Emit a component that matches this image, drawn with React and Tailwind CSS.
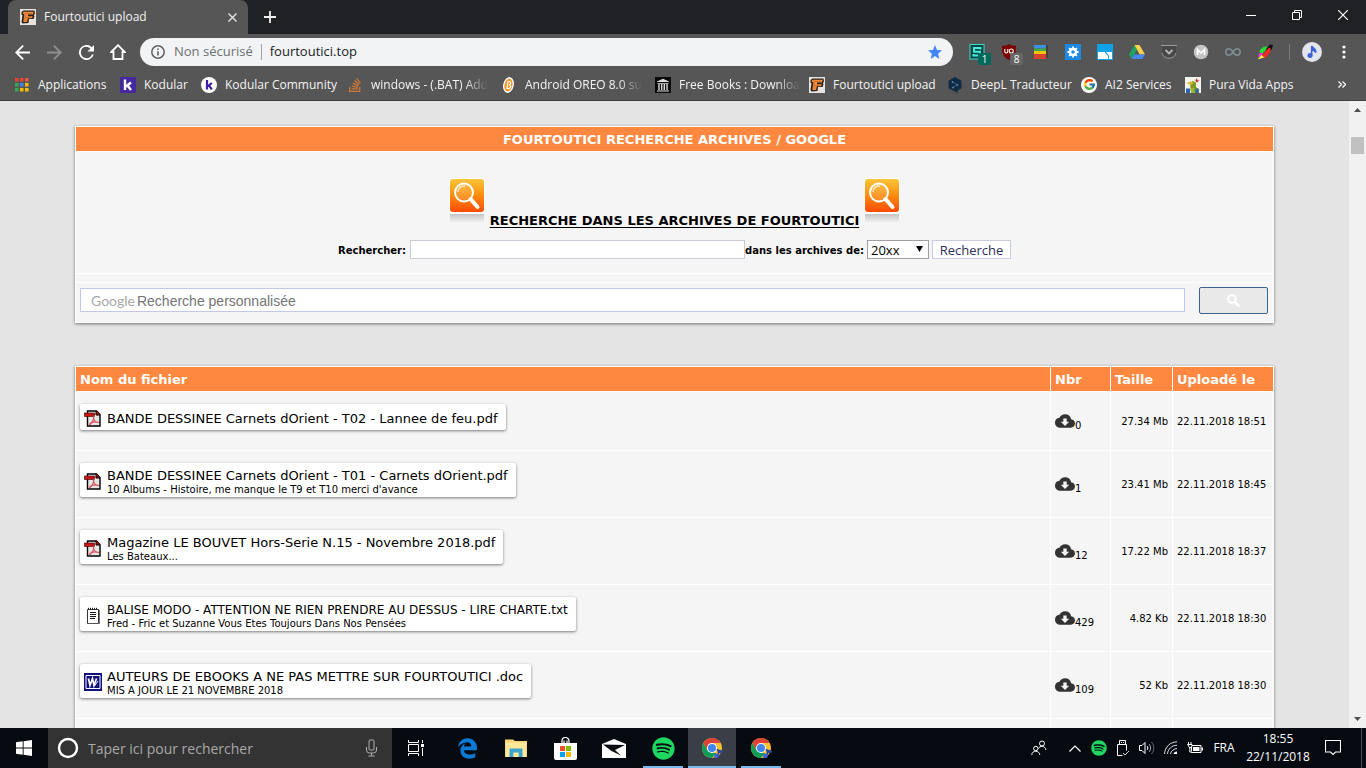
import React from "react";
import { MdCloudDownload } from "react-icons/md";
import { FcGoogle } from "react-icons/fc";
import { FaSpotify, FaEdgeLegacy, FaStackOverflow } from "react-icons/fa6";

const UI = "font-['Open_Sans','Noto_Sans',sans-serif]";
const VERDANA = "font-['DejaVu_Sans',sans-serif]";

function Svg({ w = 16, h = 16, box, children, className = "" }) {
  return (
    <svg width={w} height={h} viewBox={box || `0 0 ${w} ${h}`} fill="none" aria-hidden="true" className={`shrink-0 ${className}`}>
      {children}
    </svg>
  );
}

/* ---------- small icons ---------- */

const SiteIcon = () => (
  <Svg>
    <rect width="16" height="16" fill="#e6e2dd" />
    <path d="M1.500 3 3.500 1.500h11L15 4l-1 2.500.5 1-1 2.500H9L8.500 14l-6 .5-1-1.500 1-7H1.500z" fill="#2a2018" />
    <path d="M2.800 3.500 4 2.700h9.800L12.800 5.500H8V7.300h4.800L12 9.300H7.800L7 13H3.300L4.300 5H2.800z" fill="#f08a3c" />
    <path d="M5 4.500h7M5.500 8.500h5M5 6v6" stroke="#b95f22" strokeWidth=".6" />
  </Svg>
);

const AppsIcon = () => {
  const colors = ["#ea4335", "#ea4335", "#f5554a", "#34a853", "#4285f4", "#fbbc05", "#34a853", "#fbbc05", "#fbbc05"];
  return (
    <Svg>
      {colors.map((c, i) => (
        <rect key={i} x={1 + (i % 3) * 5} y={1 + Math.floor(i / 3) * 5} width="3.500" height="3.500" fill={c} />
      ))}
    </Svg>
  );
};

const KodularIcon = () => (
  <Svg>
    <rect width="16" height="16" rx="1" fill="#4527a0" />
    <path d="M5 2.500V13M11 5.500 6 9.500M7.500 8.500 11 13" stroke="#fff" strokeWidth="2.400" />
  </Svg>
);

const KodularRound = () => (
  <Svg>
    <circle cx="8" cy="8" r="8" fill="#fff" />
    <path d="M6 3V12.500M11 6 6.800 9.200M8 8.300 10.800 12.500" stroke="#3f1fa5" strokeWidth="2.200" />
  </Svg>
);

const OreoIcon = () => (
  <Svg>
    <ellipse cx="7.500" cy="8" rx="5.300" ry="8" fill="#fff" transform="rotate(12 7.500 8)" />
    <ellipse cx="7.500" cy="8" rx="4" ry="6.500" fill="#f29a2e" transform="rotate(12 7.500 8)" />
    <path d="M7 4.500 6 11.500h1.500c2.500 0 3-3 .5-3.500 2.300-.5 2.300-3.500 0-3.500z" stroke="#fff" strokeWidth="1.100" />
  </Svg>
);

const ArchiveIcon = () => (
  <Svg>
    <rect width="16" height="16" fill="#0a0a0a" />
    <path d="M2 4.500 8 1.800l6 2.700V5H2zM2.500 6h11v.8h-11zM2 13.500h12v1H2z" fill="#ddd" />
    <path d="M4 7v6M6.700 7v6M9.300 7v6M12 7v6" stroke="#ddd" strokeWidth="1.400" />
  </Svg>
);

const DeepLIcon = () => (
  <Svg>
    <path d="M8 0 14.500 3.800v7.500L10.500 13.600V16L8 14.500 1.500 11.300V3.800z" fill="#0f2b46" />
    <path d="M5.500 5 10.500 7.800 6 10.500" stroke="#4a6c8c" strokeWidth=".8" />
    <circle cx="5.500" cy="5" r=".9" fill="#5f86a8" />
    <circle cx="10.500" cy="7.800" r=".9" fill="#5f86a8" />
    <circle cx="6" cy="10.500" r=".9" fill="#5f86a8" />
  </Svg>
);

const GoogleIcon = () => (
  <span className="flex size-4 shrink-0 items-center justify-center rounded-full bg-white">
    <FcGoogle size={13} />
  </span>
);

const PuraVidaIcon = () => (
  <Svg>
    <rect width="16" height="16" fill="#f4f4ec" />
    <path d="M5 5.500 8 4l3 1.500V10l3 2.500V16H6l-.5-4z" fill="#7f9a1e" />
    <path d="M8.500 1.500 10.500 3.500 12 1l.5 2.500L14.500 3 12 5.500z" fill="#c2202a" />
    <path d="M1.500 6 6 4.500l3 1.500-3 2z" fill="#d9b62a" />
    <path d="M1 11.500h4V16H1zM10.500 11.500h3V16h-3z" fill="#2b62b5" />
    <path d="M6 11h3.500v5H6z" fill="#9bb52c" />
  </Svg>
);

/* ---------- toolbar ---------- */

function IconButton({ label, children, width = "w-8", className = "" }) {
  return (
    <button type="button" aria-label={label} className={`flex shrink-0 items-center justify-center ${width} ${className}`}>
      {children}
    </button>
  );
}

const extensions = [
  {
    label: "Stylus",
    badge: "1",
    badgeClass: "bg-[#00695c]",
    icon: (
      <Svg>
        <rect x="1" y=".5" width="14" height="14.500" fill="#0a4644" stroke="#39d6c6" />
        <path d="M11.500 5.500V4H5v3.700h6v3.800H4.500V10" stroke="#45eddb" strokeWidth="1.900" />
      </Svg>
    ),
  },
  {
    label: "uBlock Origin",
    badge: "8",
    badgeClass: "bg-[#666666]",
    icon: (
      <Svg>
        <path d="M8 0c2 1.500 4.500 1.800 7 1.800 0 7-.5 11-7 14.200C1.500 12.800 1 8.800 1 1.800 3.500 1.800 6 1.500 8 0z" fill="#7d0000" />
        <path d="M3.800 5v2.500a1.500 1.500 0 0 0 3 0V5" stroke="#fff" strokeWidth="1.100" />
        <circle cx="10.300" cy="7" r="2" stroke="#fff" strokeWidth="1.100" />
      </Svg>
    ),
  },
  {
    label: "Manager",
    icon: (
      <Svg>
        <path d="M12 1h3v13h-3z" fill="#46403c" />
        <path d="M1 1h12v3.500H1z" fill="#3f8fe0" />
        <path d="M1 4.500h12V7H1z" fill="#3bab4b" />
        <path d="M1 7h12v3H1z" fill="#f4c20d" />
        <path d="M1 10h12v5H1z" fill="#d8432e" />
      </Svg>
    ),
  },
  {
    label: "Options",
    icon: (
      <Svg>
        <rect width="16" height="16" fill="#1e88e5" />
        <circle cx="8" cy="8" r="3" stroke="#fff" strokeWidth="2.400" />
        <path d="M8 2.500v2M8 11.500v2M2.500 8h2M11.500 8h2M4.100 4.100l1.500 1.500M10.400 10.400l1.500 1.500M11.900 4.100l-1.500 1.500M5.600 10.400l-1.500 1.500" stroke="#fff" strokeWidth="1.800" />
      </Svg>
    ),
  },
  {
    label: "Onglets",
    icon: (
      <Svg>
        <rect width="16" height="16" fill="#0ea2e8" />
        <path d="M1 8h6.500l3.500 4V15H1z" fill="#fff" />
        <path d="M9 8h6v7h-3v-3.500z" fill="#fff" />
      </Svg>
    ),
  },
  {
    label: "Google Drive",
    icon: (
      <Svg>
        <path d="M5.500 1 0 10.500 2.700 15 8 5.500z" fill="#1fa463" />
        <path d="M5.500 1h5L16 10.500h-5.300z" fill="#ffd04b" />
        <path d="M5.300 10.500H16L13.300 15H2.700z" fill="#4688f4" />
      </Svg>
    ),
  },
  {
    label: "Pocket",
    icon: (
      <Svg>
        <path d="M1 2h14v5c0 9-14 9-14 0z" fill="#484848" />
        <path d="M0 1.500h16M1 9c1.500 7 12.500 7 14 0" stroke="#9a9a9a" />
        <path d="m4.500 6 3.500 3.500L11.500 6" stroke="#b5b5b5" strokeWidth="1.800" />
      </Svg>
    ),
  },
  {
    label: "Mega",
    icon: (
      <Svg>
        <circle cx="8" cy="8" r="7.300" fill="#c4c4c4" />
        <path d="M4.500 11V5.500L8 9l3.500-3.500V11" stroke="#fff" strokeWidth="1.700" />
      </Svg>
    ),
  },
  {
    label: "Infini",
    icon: (
      <Svg>
        <path d="M8 8C6.500 5.500 5.500 4.800 4 4.800a3.200 3.200 0 0 0 0 6.400C5.500 11.200 6.500 10.500 8 8s2.500-3.200 4-3.200a3.200 3.200 0 0 1 0 6.400C10.500 11.200 9.500 10.500 8 8z" stroke="#7d8f92" strokeWidth="1.500" />
      </Svg>
    ),
  },
  {
    label: "Couleurs",
    icon: (
      <Svg>
        <path d="M9 5 13 .5 16 1l-1 4-4.500 5z" fill="#111" />
        <path d="M2 7.500C4 4 7 2 10.500 2.500L9 5.500 5 10z" fill="#22dd33" />
        <path d="M2.500 9 1 13.500l3-1.500 2-3z" fill="#ff35d0" />
        <path d="M.5 15.500 4.500 11l4 2z" fill="#fff34a" />
        <path d="M5 11.500 12 3.500l2 1.500-1.500 4-4.500 5z" fill="#ff2a1f" />
      </Svg>
    ),
  },
];

const bookmarks = [
  { label: "Applications", icon: <AppsIcon />, width: "w-[106px]" },
  { label: "Kodular", icon: <KodularIcon />, width: "w-[81px]" },
  { label: "Kodular Community", icon: <KodularRound />, width: "w-[146px]" },
  { label: "windows - (.BAT) Add", icon: <FaStackOverflow size={16} color="#d07a35" className="shrink-0" />, width: "w-[154px]", fade: true },
  { label: "Android OREO 8.0 su", icon: <OreoIcon />, width: "w-[154px]", fade: true },
  { label: "Free Books : Downloa", icon: <ArchiveIcon />, width: "w-[154px]", fade: true },
  { label: "Fourtoutici upload", icon: <SiteIcon />, width: "w-[138px]" },
  { label: "DeepL Traducteur", icon: <DeepLIcon />, width: "w-[134px]" },
  { label: "AI2 Services", icon: <GoogleIcon />, width: "w-[104px]" },
  { label: "Pura Vida Apps", icon: <PuraVidaIcon />, width: "w-[120px]" },
];

function TabStrip() {
  return (
    <header className="flex h-[34px] bg-[#202124]">
      <div className="ml-2 flex w-60 items-center rounded-t-lg bg-[#565656] pr-2 pl-3">
        <SiteIcon />
        <span className="flex-1 pl-2 text-xs text-[#f1f1f1]">Fourtoutici upload</span>
        <IconButton label="Fermer l'onglet" width="w-4">
          <Svg w={9} h={9}><path d="m.5.500 8 8M8.500.500l-8 8" stroke="#e4e4e4" strokeWidth="1.400" /></Svg>
        </IconButton>
      </div>
      <IconButton label="Nouvel onglet" className="ml-[6px]">
        <Svg w={12} h={12}><path d="M6 0v12M0 6h12" stroke="#f1f1f1" strokeWidth="1.800" /></Svg>
      </IconButton>
      <div className="flex-1" />
      <div className="flex pb-[5px]">
        <IconButton label="Réduire" width="w-[46px]">
          <Svg w={10} h={10}><path d="M0 5.500h10" stroke="#fff" /></Svg>
        </IconButton>
        <IconButton label="Restaurer" width="w-[46px]">
          <Svg w={10} h={10}><path d="M.5 2.500h7v7h-7zM2.500 2V.500h7v7H8" stroke="#fff" /></Svg>
        </IconButton>
        <IconButton label="Fermer" width="w-[46px]">
          <Svg w={10} h={10}><path d="m0 0 10 10M10 0 0 10" stroke="#fff" strokeWidth="1.200" /></Svg>
        </IconButton>
      </div>
    </header>
  );
}

function Toolbar() {
  return (
    <div className="flex h-9 items-stretch bg-[#565656] pl-[6px]">
      <IconButton label="Précédent">
        <Svg w={15} h={15} box="4 4 16 16"><path d="M20 11H7.800l5.600-5.600L12 4l-8 8 8 8 1.400-1.400L7.800 13H20z" fill="#fff" /></Svg>
      </IconButton>
      <IconButton label="Suivant">
        <Svg w={15} h={15} box="4 4 16 16"><path d="m12 4-1.400 1.400 5.600 5.600H4v2h12.200l-5.600 5.600L12 20l8-8z" fill="#8f8f8f" /></Svg>
      </IconButton>
      <IconButton label="Actualiser">
        <Svg w={15} h={15} box="4 4 16 16"><path d="M17.650 6.350A8 8 0 1 0 19.730 14h-2.080A6 6 0 1 1 12 6c1.660 0 3.140.690 4.220 1.780L13 11h7V4z" fill="#fff" /></Svg>
      </IconButton>
      <IconButton label="Accueil">
        <Svg><path d="M8 1.200 1.300 8H3.500v7h9V8h2.200z" stroke="#fff" strokeWidth="1.800" /></Svg>
      </IconButton>
      <div className="my-1 ml-[6px] flex min-w-0 flex-1 items-center rounded-full bg-[#f1f3f4] px-[11px] text-[13px]">
        <Svg w={14} h={14}>
          <circle cx="7" cy="7" r="6.200" stroke="#5f6368" strokeWidth="1.500" />
          <path d="M7 6.200v4.300M7 3.500v1.500" stroke="#5f6368" strokeWidth="1.600" />
        </Svg>
        <span className="ml-[9px] text-[#6b6f73]">Non sécurisé</span>
        <span className="mx-2 h-4 w-px bg-[#a0a3a7]" />
        <input aria-label="Adresse" defaultValue="fourtoutici.top" className="min-w-0 flex-1 bg-transparent text-[#202124] outline-none" />
        <Svg w={14} h={14}><path d="m7 0 2 4.900 5 .4-3.900 3.400L11.300 14 7 11.100 2.700 14l1.200-5.300L0 5.300l5-.4z" fill="#4285f4" /></Svg>
      </div>
      <div className="flex pl-2">
        {extensions.map((e) => (
          <IconButton key={e.label} label={e.label}>
            <span className="relative flex">
              {e.icon}
              {e.badge && (
                <span className={`absolute top-[9px] left-[9px] flex h-3 w-[13px] items-center justify-center rounded-xs text-[10px] text-white ${e.badgeClass}`}>
                  {e.badge}
                </span>
              )}
            </span>
          </IconButton>
        ))}
      </div>
      <span className="mx-2 h-4 w-px self-center bg-[#7c7c7c]" />
      <IconButton label="Profil" width="w-7">
        <Svg w={20} h={20}>
          <circle cx="10" cy="10" r="10" fill="#e3e5ec" />
          <circle cx="8" cy="13.500" r="2.500" fill="#3b62d6" />
          <path d="M9.700 13.500V4c1 2.500 4.800 2.500 4 6.500-.6-2-2-2.500-4-2.500" stroke="#3b62d6" strokeWidth="1.600" fill="#3b62d6" />
        </Svg>
      </IconButton>
      <IconButton label="Menu" className="mr-[6px] ml-[2px]">
        <Svg w={4} h={14}>
          <circle cx="2" cy="2" r="1.600" fill="#fff" />
          <circle cx="2" cy="7" r="1.600" fill="#fff" />
          <circle cx="2" cy="12" r="1.600" fill="#fff" />
        </Svg>
      </IconButton>
    </div>
  );
}

function BookmarksBar() {
  return (
    <nav className="flex h-[31px] items-center border-b border-[#3f3f3f] bg-[#565656] pb-px pl-[14px] text-xs text-[#f4f4f4]">
      {bookmarks.map((b) => (
        <a key={b.label} href="#" className={`flex shrink-0 items-center gap-2 ${b.width}`}>
          {b.icon}
          <span className={`whitespace-nowrap ${b.fade ? "[mask-image:linear-gradient(to_right,black_80%,transparent)]" : ""}`}>
            {b.label}
          </span>
        </a>
      ))}
      <div className="flex-1" />
      <IconButton label="Autres favoris" className="mr-2">
        <Svg w={8} h={7}><path d="m.5.500 3 3-3 3M4.500.500l3 3-3 3" stroke="#fff" strokeWidth="1.300" /></Svg>
      </IconButton>
    </nav>
  );
}

/* ---------- page ---------- */

function SearchPicture({ id }) {
  return (
    <Svg w={36} h={48} className="mb-[3px]">
      <defs>
        <linearGradient id={`${id}-fill`} x1="0" y1="0" x2="0" y2="1">
          <stop offset="0" stopColor="#fdc63a" />
          <stop offset=".5" stopColor="#fb8c0e" />
          <stop offset="1" stopColor="#fd4a05" />
        </linearGradient>
        <linearGradient id={`${id}-shade`} x1="0" y1="0" x2="0" y2="1">
          <stop offset="0" stopColor="#c4c4c4" />
          <stop offset="1" stopColor="#f5f5f5" />
        </linearGradient>
      </defs>
      <rect width="36" height="36" rx="3" fill="#fff" />
      <rect x="1" y="1" width="34" height="33" rx="3" fill={`url(#${id}-fill)`} />
      <rect x="1" y="36" width="34" height="9" fill={`url(#${id}-shade)`} />
      <circle cx="15" cy="14.500" r="9" stroke="#fff" strokeWidth="2" fill="#fff" fillOpacity=".12" />
      <path d="M9 14a6 6 0 0 1 7-6" stroke="#fff" strokeOpacity=".7" strokeWidth="1.500" />
      <path d="m21.500 21 7 8" stroke="#fff" strokeWidth="4" strokeLinecap="round" />
    </Svg>
  );
}

const panel = "bg-white shadow-[0_1px_3px_rgba(0,0,0,0.5)]";

function SearchPanel() {
  return (
    <section className={`grid gap-px p-px ${panel}`}>
      <h2 className="bg-[#ff8840] pt-[2px] text-center text-[13px] leading-[22px] font-bold text-white">FOURTOUTICI RECHERCHE ARCHIVES / GOOGLE</h2>
      <div className="bg-[#f5f5f5] pt-[26px] pb-[14px]">
        <div className="flex items-end justify-center gap-[5px]">
          <SearchPicture id="left" />
          <h3 className="text-[13px] leading-4 font-bold text-black underline underline-offset-2">RECHERCHE DANS LES ARCHIVES DE FOURTOUTICI</h3>
          <SearchPicture id="right" />
        </div>
        <form className="mt-[11px] flex h-[19px] items-stretch justify-center text-[10px] leading-[22px] font-bold text-black">
          <label htmlFor="archive-query" className="mr-1">Rechercher:</label>
          <input id="archive-query" className="w-[335px] border border-[#c8ccd4] bg-white px-1 font-normal outline-none" />
          <label htmlFor="archive-year" className="mr-[3px]">dans les archives de:</label>
          <span className={`relative mr-[3px] flex w-[62px] text-[13px] font-normal ${UI}`}>
            <select id="archive-year" className="w-full appearance-none border border-[#a0a0a0] bg-white pl-[3px] leading-4 outline-none">
              <option>20xx</option>
            </select>
            <Svg w={7} h={6} className="pointer-events-none absolute top-[6px] right-[6px]"><path d="M0 0h7L3.500 6z" fill="#000" /></Svg>
          </span>
          <button type="button" className={`w-[79px] border border-[#c8cce0] bg-white text-[13px] leading-4 font-normal text-[#2f2f5c] ${UI}`}>Recherche</button>
        </form>
      </div>
      <div className="h-2 bg-[#f5f5f5]" />
      <form className="flex h-[39px] items-center gap-[14px] bg-[#f5f5f5] px-1 pb-[5px] font-['Liberation_Sans',sans-serif]">
        <label className="flex h-6 flex-1 items-center border border-[#c3c8ea] bg-white pt-px pl-[10px]">
          <span className="pr-[2px] font-['Lato',sans-serif] text-sm leading-5 text-[#a8a8a8]">Google</span>
          <input placeholder="Recherche personnalisée" className="min-w-0 flex-1 bg-transparent pt-px text-sm leading-5 outline-none placeholder:text-[#757575]" />
        </label>
        <button type="button" aria-label="Rechercher" className="mr-px flex h-[27px] w-[69px] items-center justify-center rounded-xs border border-[#3a6591] bg-[#e9e9e9]">
          <Svg w={13} h={13}><circle cx="5" cy="5" r="3.800" stroke="#fff" strokeWidth="2" /><path d="m8 8 4.500 4.500" stroke="#fff" strokeWidth="2.200" /></Svg>
        </button>
      </form>
    </section>
  );
}

const PdfIcon = () => (
  <Svg w={17} h={17}>
    <path d="M3.500 1h9L16 4.500V16H3.500z" fill="#e6e6e6" stroke="#000" strokeWidth="1.400" />
    <path d="M12 .5V5h4" fill="#b01010" stroke="#000" />
    <rect x=".5" y="3" width="10" height="3.500" fill="#c81414" stroke="#400" strokeWidth=".6" />
    <path d="M9.500 6.500c.5 3-1.500 6.500-4.500 8.500M9.500 7c0 3 2 5.500 5.500 5.500M5.500 13.500c2.500-1.500 6-2 9-1" stroke="#d8545c" strokeWidth="1.200" />
  </Svg>
);

const TxtIcon = () => (
  <Svg w={17} h={17} box="-1 0 17 17">
    <path d="M2.500 2.500h11V16.500h-11z" fill="#fff" stroke="#333" />
    <path d="M14.500 3v14M3 17h11" stroke="#777" />
    <path d="M3.500 .8v2M5.500 .8v2M7.500 .8v2M9.500 .8v2M11.500 .8v2" stroke="#222" />
    <path d="M5 5.500h6M5 7.500h6M5 9.500h6M5 11.500h5" stroke="#111" />
  </Svg>
);

const DocIcon = () => (
  <Svg w={18} h={18}>
    <rect width="18" height="18" fill="#10107c" />
    <path d="M2 2.500h14v13H2z" stroke="#fff" />
    <path d="m4.500 5.500 1.500 7 2.500-7 1.500 7 2.500-7" stroke="#fff" strokeWidth="1.700" />
    <path d="m10.500 13 3.500-5" stroke="#fff" />
  </Svg>
);

const icons = { pdf: PdfIcon, txt: TxtIcon, doc: DocIcon };

const files = [
  { type: "pdf", name: "BANDE DESSINEE Carnets dOrient - T02 - Lannee de feu.pdf", count: "0", size: "27.34 Mb", date: "22.11.2018 18:51" },
  { type: "pdf", name: "BANDE DESSINEE Carnets dOrient - T01 - Carnets dOrient.pdf", note: "10 Albums - Histoire, me manque le T9 et T10 merci d'avance", count: "1", size: "23.41 Mb", date: "22.11.2018 18:45" },
  { type: "pdf", name: "Magazine LE BOUVET Hors-Serie N.15 - Novembre 2018.pdf", note: "Les Bateaux...", count: "12", size: "17.22 Mb", date: "22.11.2018 18:37" },
  { type: "txt", small: true, name: "BALISE MODO - ATTENTION NE RIEN PRENDRE AU DESSUS - LIRE CHARTE.txt", note: "Fred - Fric et Suzanne Vous Etes Toujours Dans Nos Pensées", count: "429", size: "4.82 Kb", date: "22.11.2018 18:30" },
  { type: "doc", name: "AUTEURS DE EBOOKS A NE PAS METTRE SUR FOURTOUTICI .doc", note: "MIS A JOUR LE 21 NOVEMBRE 2018", count: "109", size: "52 Kb", date: "22.11.2018 18:30" },
];

function FileRow({ file }) {
  const Icon = icons[file.type];
  return (
    <tr className="[&>td]:bg-[#f5f5f5]">
      <td className="px-1 pt-3 pb-5">
        <a href="#" className="flex min-h-[26px] w-fit items-center rounded-xs bg-white pt-[3px] pb-px pr-2 pl-1 shadow-[0_1px_3px_rgba(0,0,0,0.5)]">
          <span className="flex w-[23px]"><Icon /></span>
          <span className="pt-[2px]">
            <span className={`block leading-4 whitespace-nowrap ${file.small ? "text-[12px]" : "text-[13px]"}`}>{file.name}</span>
            {file.note && <span className="block text-[10px] leading-3 whitespace-nowrap">{file.note}</span>}
          </span>
        </a>
      </td>
      <td className="px-1">
        <button type="button" aria-label="Télécharger" className="flex items-center">
          <MdCloudDownload size={20} color="#333" />
          <span className="pt-[10px] leading-3">{file.count}</span>
        </button>
      </td>
      <td className="px-1 text-right whitespace-nowrap">{file.size}</td>
      <td className="px-1 whitespace-nowrap">{file.date}</td>
    </tr>
  );
}

function FilesTable() {
  return (
    <table className={`w-full table-fixed border-separate border-spacing-px text-[10px] text-black ${panel}`}>
      <thead>
        <tr className="text-left text-[13px] leading-[22px] text-white [&>th]:bg-[#ff8840] [&>th]:px-1 [&>th]:pt-[2px]">
          <th>Nom du fichier</th>
          <th className="w-[59px]">Nbr</th>
          <th className="w-[61px]">Taille</th>
          <th className="w-[100px]">Uploadé le</th>
        </tr>
      </thead>
      <tbody>
        {files.map((f) => (
          <FileRow key={f.name} file={f} />
        ))}
        <tr className="h-16 [&>td]:bg-[#f5f5f5]">
          <td /><td /><td /><td />
        </tr>
      </tbody>
    </table>
  );
}

function Scrollbar() {
  return (
    <div className="flex w-[17px] shrink-0 flex-col items-center bg-[#f1f1f1] py-[7px]" aria-hidden="true">
      <Svg w={7} h={4}><path d="M0 4h7L3.500 0z" fill="#505050" /></Svg>
      <div className="mt-[25px] h-[17px] w-[13px] bg-[#c1c1c1]" />
      <div className="flex-1" />
      <Svg w={7} h={4}><path d="M0 0h7L3.500 4z" fill="#505050" /></Svg>
    </div>
  );
}

/* ---------- taskbar ---------- */

const ChromeIcon = () => (
  <Svg w={22} h={22} box="0 0 24 24">
    <circle cx="12" cy="12" r="11" fill="#fbc02d" />
    <path d="M12 1a11 11 0 0 1 9.500 5.500H12L7.200 14.700 2.500 6.500A11 11 0 0 1 12 1z" fill="#db4437" />
    <path d="M2.500 6.500 7.200 14.700 12 17.500h4.500L12 23A11 11 0 0 1 2.500 6.500z" fill="#0f9d58" />
    <circle cx="12" cy="12" r="5.500" fill="#fff" />
    <circle cx="12" cy="12" r="4.400" fill="#4285f4" />
    <path d="M17.500 13c1 2.500 4 1.500 6 3-2 .3-3 .8-4.500.5V20" stroke="#2746a0" strokeWidth="1.600" fill="#2746a0" />
    <circle cx="16.800" cy="20.500" r="2.600" fill="#3b62d6" />
  </Svg>
);

const apps = [
  {
    label: "Explorateur de fichiers",
    icon: (
      <Svg w={22} h={20}>
        <path d="M0 1.500h8L10 3h12v16H0z" fill="#f7d774" />
        <path d="M1 4.500h20V19H1z" fill="#fde79b" />
        <path d="M4.500 19v-8.500h13V19h-3.800v-4.500H8.300V19z" fill="#3ba5cc" />
      </Svg>
    ),
  },
  {
    label: "Microsoft Store",
    icon: (
      <Svg w={23} h={23}>
        <path d="M8 6V4a3.500 3.500 0 0 1 7 0v2M10 6V3.500M13 6V3.500" stroke="#fff" strokeWidth="1.200" />
        <path d="M0 6h23v15a2 2 0 0 1-2 2H2a2 2 0 0 1-2-2z" fill="#fff" />
        <path d="M6 9h5v5H6z" fill="#f25022" />
        <path d="M12 9h5v5h-5z" fill="#7fba00" />
        <path d="M6 15h5v5H6z" fill="#00a4ef" />
        <path d="M12 15h5v5h-5z" fill="#ffb900" />
      </Svg>
    ),
  },
  {
    label: "Courrier",
    icon: (
      <Svg w={24} h={19}>
        <path d="M0 5 12 0l12 5v14H0z" fill="#fff" />
        <path d="M1 5.500 23 6l-10 5 6 5.500L9.500 12z" fill="#0a0d12" />
      </Svg>
    ),
  },
  { label: "Spotify", running: true, icon: <FaSpotify size={23} color="#1ed760" /> },
  { label: "Google Chrome", active: true, icon: <ChromeIcon /> },
  { label: "Google Chrome (2)", running: true, icon: <ChromeIcon /> },
];

function TaskButton({ label, icon, running, active }) {
  return (
    <button type="button" aria-label={label} className={`flex w-12 flex-col items-center ${active ? "bg-[#3a3f47]" : ""}`}>
      <span className="flex flex-1 items-center pt-[2px]">{icon}</span>
      <span className={`h-[2px] ${active ? "w-12 bg-[#76b9ed]" : running ? "w-10 bg-[#76b9ed]" : "w-10"}`} />
    </button>
  );
}

function TrayButton({ label, children, width = "w-6", className = "" }) {
  return (
    <button type="button" aria-label={label} className={`flex shrink-0 items-center justify-center ${width} ${className}`}>
      {children}
    </button>
  );
}

function Taskbar() {
  return (
    <footer className="flex h-10 shrink-0 bg-[#060b12] text-white">
      <TrayButton label="Démarrer" width="w-12">
        <Svg><path d="M0 2.300 6.700 1.300v6.300H0zM7.600 1.200 16 0v7.600H7.600zM0 8.500h6.700v6.300L0 13.800zM7.600 8.500H16V16l-8.400-1.200z" fill="#fff" /></Svg>
      </TrayButton>
      <label className="flex w-[344px] items-center bg-[#333333] pr-[14px] pl-[9px]">
        <Svg w={22} h={22}><circle cx="11" cy="11" r="9" stroke="#fff" strokeWidth="2.400" /></Svg>
        <input placeholder="Taper ici pour rechercher" className="ml-[9px] min-w-0 flex-1 bg-transparent text-[14px] outline-none placeholder:text-[#a9a9a9]" />
        <Svg w={13} h={18}>
          <rect x="4" y="1" width="5" height="10" rx="1" stroke="#b0b0b0" />
          <path d="M1.500 8v3a3 3 0 0 0 3 3h4a3 3 0 0 0 3-3V8M6.500 14v2.500M3.500 17h6" stroke="#b0b0b0" />
        </Svg>
      </label>
      <TrayButton label="Affichage des tâches" width="w-12" className="mr-[3px]">
        <Svg w={16} h={16}>
          <path d="M.5 0v2.500h10V0M.5 16v-2.500h10V16M.5 4.500h10v7H.500zM14.500 0v3M14.500 8v8" stroke="#fff" />
          <path d="M13 4h3v3h-3z" fill="#fff" />
        </Svg>
      </TrayButton>
      <div className="flex gap-px">
        <TaskButton label="Microsoft Edge" icon={<FaEdgeLegacy size={21} color="#0a7ad6" />} />
        {apps.map((a) => (
          <TaskButton key={a.label} {...a} />
        ))}
      </div>
      <div className="flex-1" />
      <TrayButton label="Contacts" className="mr-3">
        <Svg w={16} h={16}>
          <circle cx="11" cy="3.500" r="2.500" stroke="#fff" />
          <path d="M7.500 8.500c1-2.800 6.500-3.500 7.500 1.500" stroke="#fff" />
          <circle cx="4.800" cy="8.500" r="2.200" stroke="#fff" />
          <path d="M.8 15c0-5 7.700-5 8 0" stroke="#fff" />
        </Svg>
      </TrayButton>
      <TrayButton label="Icônes cachées">
        <Svg w={12} h={7}><path d="m.5 6.500 5.500-5.500 5.500 5.500" stroke="#fff" strokeWidth="1.200" /></Svg>
      </TrayButton>
      <TrayButton label="Spotify"><FaSpotify size={16} color="#1ed760" /></TrayButton>
      <TrayButton label="Périphérique USB">
        <Svg w={12} h={16}>
          <path d="M2.500 4.500v-4h6v4M.5 4.500h9v6M.5 4.500v11h5" stroke="#fff" />
          <path d="M4 2.500h1M6 2.500h1" stroke="#fff" />
          <path d="m6 13 2 2 4-4" stroke="#ddd" />
        </Svg>
      </TrayButton>
      <TrayButton label="Volume">
        <Svg w={16} h={14}>
          <path d="M.5 4.500h2.500L6 1.500v11l-3-3H.500z" stroke="#fff" />
          <path d="M8 5c1 1 1 3 0 4" stroke="#fff" />
          <path d="M10 3c2 2 2 6 0 8" stroke="#aaa" />
          <path d="M12.500 1c3 3.500 3 8.500 0 12" stroke="#666" />
        </Svg>
      </TrayButton>
      <TrayButton label="Réseau">
        <Svg w={14} h={14}>
          <path d="M.5 13C1 6 6 1 13 .8M3.500 13C4 8 7.500 4.500 13 4.200M6.500 13C7 10 9.500 7.800 13 7.500" stroke="#ddd" />
          <path d="M9.500 13c.2-1.500 1.500-2.600 3.500-2.600V13z" fill="#fff" />
        </Svg>
      </TrayButton>
      <TrayButton label="Batterie">
        <Svg w={16} h={12}>
          <path d="M4.500 9.500V3.500h9.500v7H4.500z" stroke="#fff" />
          <path d="M6 5h6.500v4H6zM14.500 5.500H16v3h-1.500z" fill="#fff" />
          <path d="M1.500 0v2M4 0v2M.5 2.500H5v2L2.800 6zM2.800 6v4h2" stroke="#fff" fill="#060b12" />
        </Svg>
      </TrayButton>
      <TrayButton label="Langue" width="w-[34px]" className="text-xs">FRA</TrayButton>
      <time className="flex w-[74px] flex-col items-center justify-center text-xs leading-[18px]">
        <span>18:55</span>
        <span>22/11/2018</span>
      </time>
      <TrayButton label="Notifications" width="w-9">
        <Svg w={16} h={16}><path d="M.5.500h15v11.500H10.500L8 14.500 5.500 12H.500z" stroke="#fff" strokeWidth="1.100" /></Svg>
      </TrayButton>
      <span className="mr-1 ml-[10px] w-px bg-[#4a4f55]" />
    </footer>
  );
}

export default function App() {
  return (
    <div className={`flex h-screen flex-col overflow-hidden ${UI}`}>
      <TabStrip />
      <Toolbar />
      <BookmarksBar />
      <div className="flex min-h-0 flex-1 bg-[#e4e4e4]">
        <main className={`min-w-0 flex-1 overflow-hidden px-[75px] pt-[25px] ${VERDANA}`}>
          <SearchPanel />
          <div className="h-[43px]" />
          <FilesTable />
        </main>
        <Scrollbar />
      </div>
      <Taskbar />
    </div>
  );
}
